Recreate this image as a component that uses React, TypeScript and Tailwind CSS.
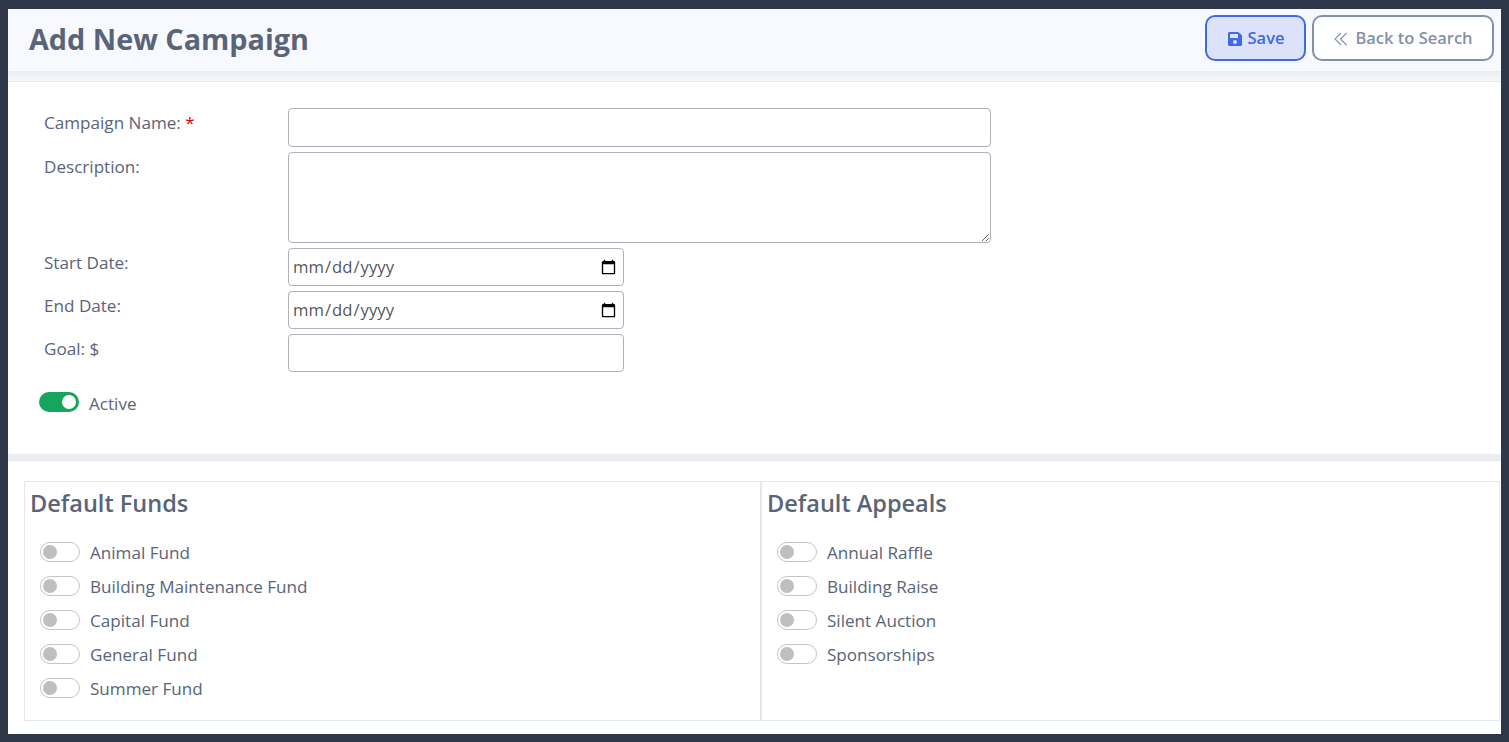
import React from "react";
import { FaSave } from "react-icons/fa";

const funds = [
  "Animal Fund",
  "Building Maintenance Fund",
  "Capital Fund",
  "General Fund",
  "Summer Fund",
];
const appeals = ["Annual Raffle", "Building Raise", "Silent Auction", "Sponsorships"];

const inputClass = "block h-[38px] rounded border border-[#b0b0b8] bg-white";
const dateClass = "block h-[38px] w-[336px] rounded border border-[#b0b0b8] bg-white pr-1 pl-[3px] text-[16.7px] text-black/70";

const Toggle: React.FC<{ label: string }> = ({ label }) => (
  <div className="flex h-[34px] items-start">
    <span className="mt-[6px] flex h-5 w-10 items-center rounded-full border border-[#c4c4c4] bg-white pl-[2px]">
      <span className="h-3.5 w-3.5 rounded-full bg-[#bfbfbf]" />
    </span>
    <span className="ml-[10px] pt-[4px] text-[#5a6478]">{label}</span>
  </div>
);

const FormRow: React.FC<{ label: React.ReactNode; children: React.ReactNode }> = ({ label, children }) => (
  <div className="flex">
    <div className="w-[244px] pt-[2px] leading-[25px] text-[#5a6478]">{label}</div>
    {children}
  </div>
);

const ToggleColumn: React.FC<{ title: string; items: string[]; className: string }> = ({ title, items, className }) => (
  <div className={className}>
    <h2 className="pl-[5px] pt-[3px] text-[23.5px] leading-[36px] font-semibold text-[#5a6478]">{title}</h2>
    <div className="mt-[15px] pl-[15px]">
      {items.map((item) => (
        <Toggle key={item} label={item} />
      ))}
    </div>
  </div>
);

export default function App() {
  return (
    <div className="h-[742px] w-[1509px] overflow-hidden bg-[#2d3748] pt-[9px] pl-2 pr-2 font-['Open_Sans',sans-serif] text-[17.1px]">
      <div className="h-[725px] bg-white">
        <div className="relative flex h-[62px] items-start justify-between bg-[#f8f9ff] pr-[7px] pl-[21px]">
          <h1 className="pt-[9px] text-[28.8px] leading-[42px] font-bold text-[#5a6478]">Add New Campaign</h1>
          <div className="flex gap-[6px] pt-[6px]">
            <button className="flex h-[46px] w-[101px] items-center justify-center gap-[5px] rounded-[10px] border-2 border-[#4169e1] bg-[#dde2fb] pt-[1px] text-[16.5px] font-semibold text-[#4169e1]">
              <FaSave className="h-4 w-4" />
              Save
            </button>
            <button className="flex h-[46px] w-[182px] items-center justify-center gap-[6px] rounded-[10px] border-2 border-[#8590a6] bg-white pt-[1px] text-[16.5px] font-semibold text-[#8590a6]">
              <svg width="16" height="16" viewBox="0 0 16 16" fill="none" stroke="currentColor" strokeWidth="1.1">
                <path d="M8 2 2 8l6 6" />
                <path d="M13.5 2 7.5 8l6 6" />
              </svg>
              Back to Search
            </button>
          </div>
        </div>
        <div className="h-[11px] border-b border-[#e6e7ee] bg-linear-to-b from-[#ebecf2] to-[#f6f7fb]" />

        <div className="flex flex-col gap-[5px] pt-[26px] pl-[36px]">
          <FormRow
            label={
              <>
                Campaign Name: <span className="text-[#e00000]">*</span>
              </>
            }
          >
            <input className={`${inputClass} h-[39px] w-[703px]`} />
          </FormRow>
          <FormRow label="Description:">
            <textarea className="block h-[91px] w-[703px] rounded border border-[#b0b0b8] bg-white" />
          </FormRow>
          <FormRow label="Start Date:">
            <input type="date" className={dateClass} />
          </FormRow>
          <FormRow label="End Date:">
            <input type="date" className={dateClass} />
          </FormRow>
          <FormRow label="Goal: $">
            <input className={`${inputClass} w-[336px]`} />
          </FormRow>
        </div>

        <div className="mt-[20px] ml-[31px] flex h-5 items-start">
          <span className="flex h-5 w-10 items-center justify-end rounded-full bg-[#17a45c] pr-[3px]">
            <span className="h-3.5 w-3.5 rounded-full bg-white" />
          </span>
          <span className="ml-[10px] leading-[24px] text-[#5a6478]">Active</span>
        </div>

        <div className="mt-[42px] h-[7px] border-b border-[#e6e7ee] bg-[#ebedf3]" />

        <div className="mt-[20px] ml-[16px] flex h-[240px] w-[1476px] border border-[#e6e7ee]">
          <ToggleColumn title="Default Funds" items={funds} className="w-[737px] border-r-2 border-[#e6e7ee]" />
          <ToggleColumn title="Default Appeals" items={appeals} className="flex-1" />
        </div>
      </div>
    </div>
  );
}
